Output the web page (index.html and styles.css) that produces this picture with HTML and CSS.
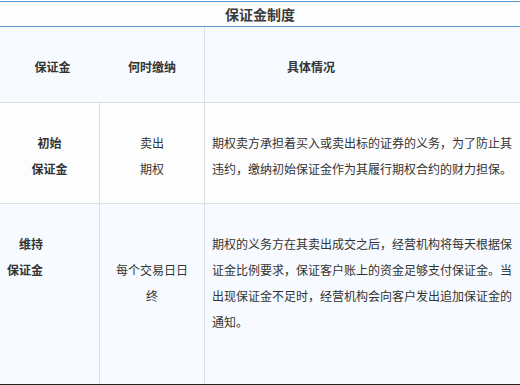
FILE: index.html
```html
<!DOCTYPE html>
<html lang="zh-CN">
<head>
<meta charset="utf-8">
<title>保证金制度</title>
<link rel="stylesheet" href="styles.css">
</head>
<body>
<div class="sheet">
  <div class="title">保证金制度</div>
  <div class="row head">
    <div class="cell c1 h1">保证金</div>
    <div class="cell c2 h2">何时缴纳</div>
    <div class="cell c3 h3">具体情况</div>
  </div>
  <div class="row r1">
    <div class="cell c1 name">初始<br>保证金</div>
    <div class="cell c2 when">卖出<br>期权</div>
    <div class="cell c3 desc">期权卖方承担着买入或卖出标的证券的义务，为了防止其违约，缴纳初始保证金作为其履行期权合约的财力担保。</div>
  </div>
  <div class="row r2">
    <div class="cell c1 name right">维持<br>保证金</div>
    <div class="cell c2 when low">每个交易日日终</div>
    <div class="cell c3 desc">期权的义务方在其卖出成交之后，经营机构将每天根据保证金比例要求，保证客户账上的资金足够支付保证金。当出现保证金不足时，经营机构会向客户发出追加保证金的通知。</div>
  </div>
</div>
</body>
</html>
```

FILE: styles.css
```css
html, body {
  margin: 0;
  padding: 0;
  background: #ffffff;
}

body {
  font-family: "Noto Sans CJK SC", "Noto Sans", sans-serif;
  font-size: 12px;
  color: #333333;
}

.sheet {
  width: 520px;
  margin-top: 1px;
  border-top: 1px solid #5b9bd5;
}

.title {
  height: 24px;
  line-height: 24px;
  text-align: center;
  font-size: 14px;
  font-weight: bold;
  color: #3a3a3a;
  background: #fdfdfd;
  border-bottom: 1px solid #5b9bd5;
}

.row {
  display: grid;
  grid-template-columns: 100px 105px 315px;
}

.head {
  height: 76px;
  background: #f7fbff;
  border-bottom: 1px solid #dcdfe3;
  box-sizing: border-box;
}

.r1 {
  height: 101px;
  background: #fdfdfe;
  border-bottom: 1px solid #dcdfe3;
  box-sizing: border-box;
}

.r2 {
  height: 181px;
  background: #f7fbff;
  border-bottom: 1px solid #222222;
  box-sizing: border-box;
}

.cell {
  box-sizing: border-box;
  padding-top: 27px;
  line-height: 26px;
}

.c1,
.c2 {
  border-right: 1px solid #dcdfe3;
}

.head .c1 {
  border-right: none;
}

.h1,
.h2,
.h3 {
  font-weight: bold;
}

.h1 {
  text-align: center;
  padding-left: 5px;
}

.h2 {
  text-align: center;
}

.h3 {
  padding-left: 82px;
}

.name {
  font-weight: bold;
  text-align: center;
}

.name.right {
  text-align: right;
  padding-right: 56px;
}

.when {
  text-align: center;
  padding-left: 13px;
  padding-right: 13px;
}

.when.low {
  padding-top: 53px;
}

.desc {
  padding-left: 7px;
  padding-right: 7px;
}
```
